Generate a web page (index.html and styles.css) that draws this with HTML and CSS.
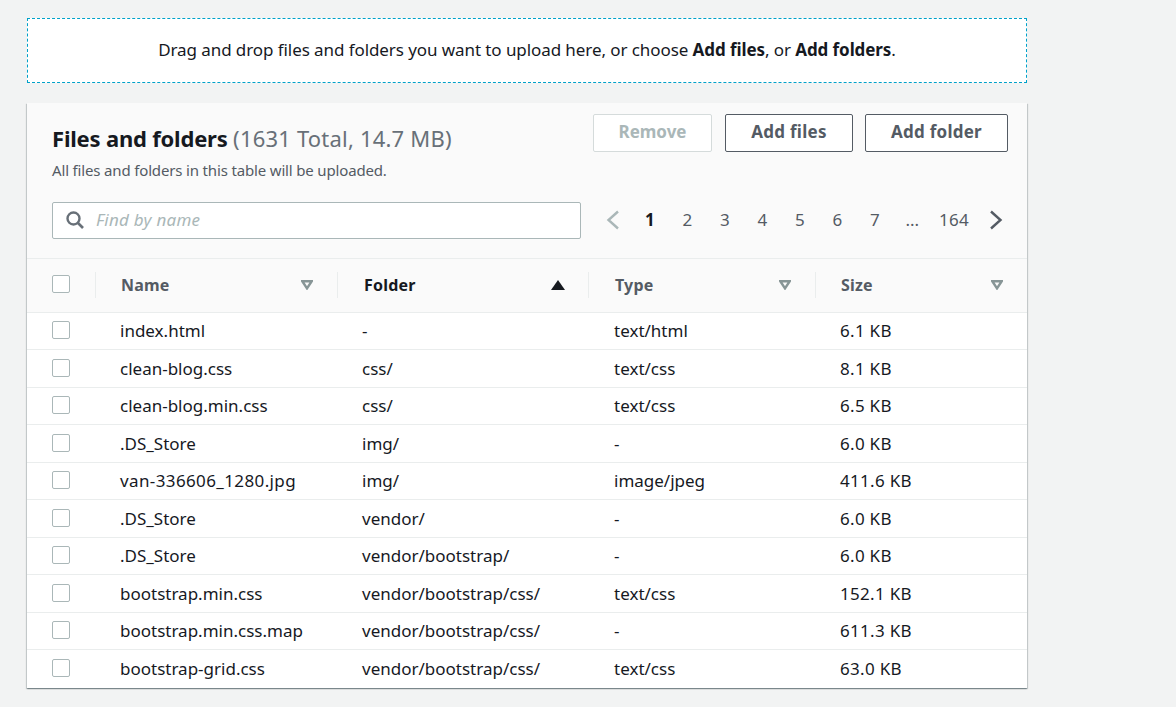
FILE: index.html
```html
<!DOCTYPE html>
<html lang="en">
<head>
    <meta charset="UTF-8">
    <meta name="viewport" content="width=device-width, initial-scale=1.0">
    <title>Upload files and folders</title>
    <link rel="stylesheet" href="styles.css">
</head>
<body>
<div class="page">
    <div class="dropzone">Drag and drop files and folders you want to upload here, or choose <strong>Add files</strong>, or <strong>Add folders</strong>.</div>

    <div class="card">
        <div class="card-head">
            <div class="head-top">
                <div class="head-text">
                    <h2>Files and folders <span class="count">(1631 Total, 14.7 MB)</span></h2>
                    <p>All files and folders in this table will be uploaded.</p>
                </div>
                <div class="actions">
                    <button class="btn btn-remove">Remove</button>
                    <button class="btn btn-files">Add files</button>
                    <button class="btn btn-folder">Add folder</button>
                </div>
            </div>
            <div class="tools">
                <div class="search">
                    <svg class="search-icon" width="20" height="20" viewBox="0 0 20 20"><circle cx="8.5" cy="8.5" r="6" fill="none" stroke="#687078" stroke-width="2.4"/><path d="M13 13l5 5" fill="none" stroke="#687078" stroke-width="2.6"/></svg>
                    <span class="placeholder">Find by name</span>
                </div>
                <div class="pager">
                    <svg class="pager-arrow" width="16" height="20" viewBox="0 0 16 20"><path d="M13 1.5L3.5 10l9.5 8.500" fill="none" stroke="#aab7b8" stroke-width="2.4"/></svg>
                    <span class="page-no current">1</span>
                    <span class="page-no">2</span>
                    <span class="page-no">3</span>
                    <span class="page-no">4</span>
                    <span class="page-no">5</span>
                    <span class="page-no">6</span>
                    <span class="page-no">7</span>
                    <span class="page-no">...</span>
                    <span class="page-last">164</span>
                    <svg class="pager-arrow" width="16" height="20" viewBox="0 0 16 20"><path d="M3 1.500l9.500 8.500-9.500 8.500" fill="none" stroke="#545b64" stroke-width="2.4"/></svg>
                </div>
            </div>
        </div>

        <table>
            <thead>
            <tr>
                <th class="col-check"><span class="th-in"><span class="box"></span></span></th>
                <th class="col-name"><span class="th-in">Name<svg class="sort" width="12" height="10" viewBox="0 0 12 10"><path d="M1.3 1.2h9.4L6 8.4z" fill="none" stroke="#879596" stroke-width="2.4"/></svg></span></th>
                <th class="col-folder active"><span class="th-in">Folder<svg class="sort" width="14" height="10" viewBox="0 0 14 10"><path d="M7 0l7 10H0z" fill="#16191f"/></svg></span></th>
                <th class="col-type"><span class="th-in">Type<svg class="sort" width="12" height="10" viewBox="0 0 12 10"><path d="M1.3 1.2h9.4L6 8.4z" fill="none" stroke="#879596" stroke-width="2.4"/></svg></span></th>
                <th class="col-size"><span class="th-in">Size<svg class="sort" width="12" height="10" viewBox="0 0 12 10"><path d="M1.3 1.2h9.4L6 8.4z" fill="none" stroke="#879596" stroke-width="2.4"/></svg></span></th>
            </tr>
            </thead>
            <tbody>
            <tr><td><span class="box"></span></td><td>index.html</td><td>-</td><td>text/html</td><td>6.1 KB</td></tr>
            <tr><td><span class="box"></span></td><td>clean-blog.css</td><td>css/</td><td>text/css</td><td>8.1 KB</td></tr>
            <tr><td><span class="box"></span></td><td>clean-blog.min.css</td><td>css/</td><td>text/css</td><td>6.5 KB</td></tr>
            <tr><td><span class="box"></span></td><td>.DS_Store</td><td>img/</td><td>-</td><td>6.0 KB</td></tr>
            <tr><td><span class="box"></span></td><td class="digits">van-336606_1280.jpg</td><td>img/</td><td>image/jpeg</td><td>411.6 KB</td></tr>
            <tr><td><span class="box"></span></td><td>.DS_Store</td><td>vendor/</td><td>-</td><td>6.0 KB</td></tr>
            <tr><td><span class="box"></span></td><td>.DS_Store</td><td>vendor/bootstrap/</td><td>-</td><td>6.0 KB</td></tr>
            <tr><td><span class="box"></span></td><td>bootstrap.min.css</td><td>vendor/bootstrap/css/</td><td>text/css</td><td>152.1 KB</td></tr>
            <tr><td><span class="box"></span></td><td>bootstrap.min.css.map</td><td>vendor/bootstrap/css/</td><td>-</td><td>611.3 KB</td></tr>
            <tr><td><span class="box"></span></td><td>bootstrap-grid.css</td><td>vendor/bootstrap/css/</td><td>text/css</td><td>63.0 KB</td></tr>
            </tbody>
        </table>
    </div>
</div>
</body>
</html>
```

FILE: styles.css
```css
html, body {
    margin: 0;
    height: 100%;
    overflow: hidden;
}
body {
    font-family: "Noto Sans", sans-serif;
    font-size: 17px;
    line-height: 22px;
    color: #16191f;
    background-color: #f2f3f3;
}
.page {
    width: 1000px;
    padding: 18px 0 0 27px;
}
.dropzone {
    box-sizing: border-box;
    height: 65px;
    padding-top: 20px;
    text-align: center;
    letter-spacing: -0.08px;
    background-color: #fff;
    border: 1px dashed #00a1c9;
}
.card {
    margin-top: 20px;
    background-color: #fff;
    box-shadow: 0 1px 1px 0 rgba(0, 28, 36, 0.3), 1px 1px 1px 0 rgba(0, 28, 36, 0.15), -1px 1px 1px 0 rgba(0, 28, 36, 0.15);
}
.card-head {
    box-sizing: border-box;
    height: 156px;
    padding: 11px 19px 0 25px;
    background-color: #fafafa;
    border-bottom: 1px solid #eaeded;
}
.head-top {
    display: flex;
    justify-content: space-between;
    height: 88px;
}
.head-text h2 {
    margin: 11px 0 0;
    font-size: 22px;
    line-height: 26px;
    font-weight: 700;
    letter-spacing: -0.2px;
}
.count {
    font-weight: 400;
    letter-spacing: 0.2px;
    color: #687078;
}
.head-text p {
    margin: 9px 0 0;
    font-size: 15px;
    line-height: 20px;
    letter-spacing: -0.16px;
    color: #545b64;
}
.actions {
    display: flex;
    height: 38px;
}
.btn {
    box-sizing: border-box;
    height: 38px;
    padding: 0 0 3px;
    font-family: inherit;
    font-size: 17px;
    font-weight: 700;
    letter-spacing: 0.25px;
    color: #545b64;
    background-color: #fff;
    border: 1px solid #545b64;
    border-radius: 2px;
}
.btn-remove {
    width: 119px;
    letter-spacing: 0;
    color: #aab7b8;
    border-color: #d5dbdb;
}
.btn-files {
    width: 128px;
    margin-left: 13px;
}
.btn-folder {
    width: 143px;
    margin-left: 12px;
}
.tools {
    display: flex;
    align-items: center;
}
.search {
    box-sizing: border-box;
    width: 529px;
    height: 37px;
    display: flex;
    align-items: center;
    padding: 0 0 2px 12px;
    background-color: #fff;
    border: 1px solid #aab7b8;
    border-radius: 2px;
}
.search-icon {
    flex: none;
}
.placeholder {
    margin-left: 11px;
    font-style: italic;
    letter-spacing: 0.25px;
    color: #aab7b8;
}
.pager {
    display: flex;
    align-items: center;
    margin: -2px 0 0 24px;
    color: #545b64;
}
.page-no {
    width: 37.5px;
    text-align: center;
}
.page-no.current {
    font-weight: 700;
    color: #16191f;
}
.page-last {
    width: 46px;
    text-align: center;
    letter-spacing: 0.3px;
}
.pager-arrow {
    flex: none;
}
.pager-arrow:first-child {
    margin-right: 10px;
}
.pager-arrow:last-child {
    margin-left: 11px;
}
table {
    width: 1000px;
    border-collapse: separate;
    border-spacing: 0;
    table-layout: fixed;
}
th {
    box-sizing: border-box;
    height: 53.9px;
    padding: 0;
    text-align: left;
    font-size: 16px;
    font-weight: 700;
    letter-spacing: 0.2px;
    color: #545b64;
    background-color: #fafafa;
    border-bottom: 1px solid #eaeded;
}
.col-check { width: 68px; }
.col-name { width: 242px; }
.col-folder { width: 251px; }
.col-type { width: 227px; }
.th-in {
    box-sizing: border-box;
    height: 26px;
    display: flex;
    align-items: center;
    justify-content: space-between;
    padding: 0 24px 0 25px;
    border-left: 1px solid #eaeded;
}
.col-check .th-in {
    border-left: none;
}
.col-folder.active {
    color: #16191f;
}
.col-folder .th-in { padding: 0 23px 0 26px; }
.col-type .th-in { padding-left: 26px; }
td {
    box-sizing: border-box;
    height: 37.5px;
    padding: 0 0 0 25px;
    border-bottom: 1px solid #eaeded;
}
td:nth-child(4) {
    padding-left: 26px;
}
td:nth-child(5) {
    letter-spacing: 0.3px;
}
td.digits {
    letter-spacing: 0.38px;
}
tbody tr:last-child td {
    border-bottom: none;
}
.box {
    display: block;
    box-sizing: border-box;
    width: 18px;
    height: 18px;
    margin-bottom: 2px;
    background-color: #fff;
    border: 1px solid #aab7b8;
    border-radius: 2px;
}
```
